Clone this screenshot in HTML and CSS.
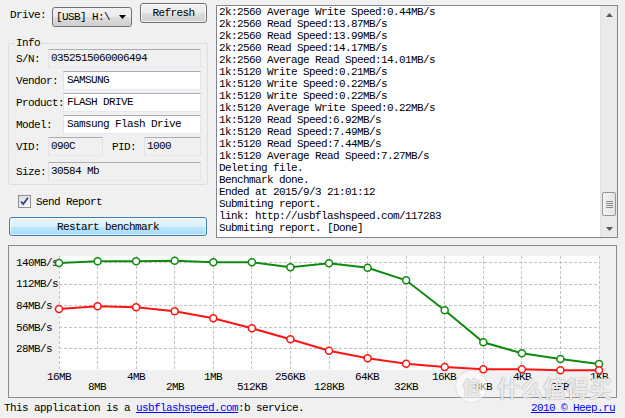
FILE: index.html
```html
<!DOCTYPE html>
<html>
<head>
<meta charset="utf-8">
<title>USB Flash Benchmark</title>
<link rel="stylesheet" href="styles.css">
</head>
<body>
<div class="app">
  <div class="top">
    <div class="left">
      <div class="drive-row">
        <span class="drive-lbl">Drive:</span>
        <div class="combo"><span class="combo-text">[USB] H:\</span><svg class="combo-arrow" width="7" height="4" viewBox="0 0 7 4"><path d="M0 0h7L3.5 4z" fill="#000"/></svg></div>
        <button class="btn refresh">Refresh</button>
      </div>
      <fieldset class="info">
        <legend>Info</legend>
        <div class="row first"><span class="lbl w-short">S/N:</span><div class="field ro grow">0352515060006494</div></div>
        <div class="row"><span class="lbl w-long">Vendor:</span><div class="field grow pad3">SAMSUNG</div></div>
        <div class="row"><span class="lbl w-long">Product:</span><div class="field grow pad3">FLASH DRIVE</div></div>
        <div class="row"><span class="lbl w-long">Model:</span><div class="field grow pad3">Samsung Flash Drive</div></div>
        <div class="row"><span class="lbl w-short">VID:</span><div class="field ro vid">090C</div><span class="lbl pid">PID:</span><div class="field ro grow">1000</div></div>
        <div class="row size"><span class="lbl w-short">Size:</span><div class="field ro grow">30584 Mb</div></div>
      </fieldset>
      <div class="check"><span class="box"><svg width="11" height="11" viewBox="0 0 11 11"><path d="M2 5.5l2.2 2.6L9 1.8" fill="none" stroke="#2b3f9c" stroke-width="1.8"/></svg></span><span>Send Report</span></div>
      <button class="btn restart">Restart benchmark</button>
    </div>
    <div class="log">
      <div class="log-text">2k:2560 Average Write Speed:0.44MB/s
2k:2560 Read Speed:13.87MB/s
2k:2560 Read Speed:13.99MB/s
2k:2560 Read Speed:14.17MB/s
2k:2560 Average Read Speed:14.01MB/s
1k:5120 Write Speed:0.21MB/s
1k:5120 Write Speed:0.22MB/s
1k:5120 Write Speed:0.22MB/s
1k:5120 Average Write Speed:0.22MB/s
1k:5120 Read Speed:6.92MB/s
1k:5120 Read Speed:7.49MB/s
1k:5120 Read Speed:7.44MB/s
1k:5120 Average Read Speed:7.27MB/s
Deleting file.
Benchmark done.
Ended at 2015/9/3 21:01:12
Submiting report.
link: http://usbflashspeed.com/117283
Submiting report. [Done]</div>
      <div class="scrollbar">
        <div class="sb-btn"><svg width="7" height="4" viewBox="0 0 7 4"><path d="M0 4h7L3.5 0z" fill="#5a5a5a"/></svg></div>
        <div class="sb-track"><div class="sb-thumb"><span></span><span></span><span></span><span></span></div></div>
        <div class="sb-btn"><svg width="7" height="4" viewBox="0 0 7 4"><path d="M0 0h7L3.5 4z" fill="#5a5a5a"/></svg></div>
      </div>
    </div>
  </div>
  <div class="chart">
    <svg width="608" height="151" viewBox="9 246 608 151">
      <rect x="59" y="256" width="540" height="114" fill="#fff"/>
      <g stroke="#c4c4c4" stroke-width="1" stroke-dasharray="3 2" fill="none">
        <path d="M59 262.5H599M59 284.5H599M59 305.5H599M59 327.5H599M59 348.5H599"/>
        <path d="M59.5 256V370M97.5 256V370M136.5 256V370M174.5 256V370M213.5 256V370M251.5 256V370M290.5 256V370M329.5 256V370M367.5 256V370M406.5 256V370M444.5 256V370M483.5 256V370M521.5 256V370M560.5 256V370M599.5 256V370"/>
      </g>
      <g class="ax">
        <text x="16" y="266">140MB/s</text>
        <text x="16" y="287">112MB/s</text>
        <text x="16" y="309">84MB/s</text>
        <text x="16" y="331">56MB/s</text>
        <text x="16" y="352">28MB/s</text>
      </g>
      <g class="ax mid">
        <text x="59" y="380">16MB</text>
        <text x="136" y="380">4MB</text>
        <text x="213" y="380">1MB</text>
        <text x="290" y="380">256KB</text>
        <text x="367" y="380">64KB</text>
        <text x="444" y="380">16KB</text>
        <text x="522" y="380">4KB</text>
        <text x="599" y="380">1KB</text>
        <text x="97" y="390">8MB</text>
        <text x="175" y="390">2MB</text>
        <text x="252" y="390">512KB</text>
        <text x="329" y="390">128KB</text>
        <text x="406" y="390">32KB</text>
        <text x="483" y="390">8KB</text>
        <text x="560" y="390">2KB</text>
      </g>
      <polyline fill="none" stroke="#0f8a0f" stroke-width="2" points="59,263 97.6,261.3 136.1,261.3 174.7,260.7 213.3,262.3 251.9,262.3 290.4,267.3 329,263.3 367.6,267.7 406.1,280.3 444.7,310.3 483.3,342.3 521.9,353.3 560.4,359 599,364"/>
      <polyline fill="none" stroke="#ff1414" stroke-width="2" points="59,309 97.6,306.3 136.1,307.3 174.7,311.3 213.3,318.3 251.9,328.3 290.4,339.3 329,350.7 367.6,358.3 406.1,363.7 444.7,367 483.3,369.3 521.9,369.3 560.4,370.3 599,370.3"/>
      <g fill="#fff" stroke="#0f8a0f" stroke-width="1.5">
        <circle cx="59" cy="263" r="3.5"/><circle cx="97.6" cy="261.3" r="3.5"/><circle cx="136.1" cy="261.3" r="3.5"/><circle cx="174.7" cy="260.7" r="3.5"/><circle cx="213.3" cy="262.3" r="3.5"/><circle cx="251.9" cy="262.3" r="3.5"/><circle cx="290.4" cy="267.3" r="3.5"/><circle cx="329" cy="263.3" r="3.5"/><circle cx="367.6" cy="267.7" r="3.5"/><circle cx="406.1" cy="280.3" r="3.5"/><circle cx="444.7" cy="310.3" r="3.5"/><circle cx="483.3" cy="342.3" r="3.5"/><circle cx="521.9" cy="353.3" r="3.5"/><circle cx="560.4" cy="359" r="3.5"/><circle cx="599" cy="364" r="3.5"/>
      </g>
      <g fill="#fff" stroke="#ff1414" stroke-width="1.5">
        <circle cx="59" cy="309" r="3.5"/><circle cx="97.6" cy="306.3" r="3.5"/><circle cx="136.1" cy="307.3" r="3.5"/><circle cx="174.7" cy="311.3" r="3.5"/><circle cx="213.3" cy="318.3" r="3.5"/><circle cx="251.9" cy="328.3" r="3.5"/><circle cx="290.4" cy="339.3" r="3.5"/><circle cx="329" cy="350.7" r="3.5"/><circle cx="367.6" cy="358.3" r="3.5"/><circle cx="406.1" cy="363.7" r="3.5"/><circle cx="444.7" cy="367" r="3.5"/><circle cx="483.3" cy="369.3" r="3.5"/><circle cx="521.9" cy="369.3" r="3.5"/><circle cx="560.4" cy="370.3" r="3.5"/><circle cx="599" cy="370.3" r="3.5"/>
      </g>
    </svg>
  </div>
  <div class="status">
    <span>This application is a <a class="link" href="#">usbflashspeed.com</a>:b service.</span>
    <a class="link" href="#">2010 © Heep.ru</a>
  </div>
  <div class="watermark"><span class="wm-logo">值</span><span class="wm-text">什么值得买</span></div>
</div>
</body>
</html>
```

FILE: styles.css
```css
* { box-sizing: border-box; }
html, body { margin: 0; padding: 0; }
body {
  width: 625px;
  height: 418px;
  overflow: hidden;
  background: #f0f0f0;
  color: #000;
  font-family: "Liberation Mono", "DejaVu Sans Mono", monospace;
  font-size: 11px;
  letter-spacing: -0.6px;
  line-height: 12px;
}
.app {
  position: relative;
  width: 625px;
  height: 418px;
  display: flex;
  flex-direction: column;
}
.top {
  display: flex;
  align-items: flex-start;
  padding: 3px 7px 0 8px;
  gap: 8px;
}
.left {
  width: 200px;
  display: flex;
  flex-direction: column;
}
.drive-row {
  display: flex;
  align-items: flex-start;
  height: 24px;
}
.drive-lbl {
  margin: 6px 0 0 2px;
}
.combo {
  margin: 4px 0 0 6px;
  width: 80px;
  height: 20px;
  border: 1px solid #707070;
  border-radius: 3px;
  background: linear-gradient(#f2f2f2 0%, #ebebeb 50%, #dddddd 51%, #cfcfcf 100%);
  display: flex;
  align-items: center;
  justify-content: space-between;
  padding: 0 5px 0 3px;
}
.btn {
  font: inherit;
  letter-spacing: inherit;
  line-height: 12px;
  color: #000;
  padding: 0;
  border: 1px solid #707070;
  border-radius: 3px;
  background: linear-gradient(#f2f2f2 0%, #ebebeb 50%, #dddddd 51%, #cfcfcf 100%);
  box-shadow: inset 0 0 0 1px rgba(255,255,255,0.7);
}
.refresh {
  margin-left: 8px;
  width: 67px;
  height: 20px;
}
.info {
  margin: 10px 0 0;
  padding: 0 6px 3px 7px;
  border: 1px solid #d5dfe5;
  border-radius: 3px;
  min-width: 0;
}
.info legend {
  padding: 0 1px;
  margin-left: -1px;
  line-height: 12px;
}
.row {
  display: flex;
  align-items: center;
  height: 19px;
  margin-top: 3px;
}
.row.first { margin-top: 0; }
.row.size { margin-top: 6px; }
.lbl { flex: none; }
.w-short { width: 32px; }
.w-long { width: 47px; }
.pid { width: 32px; margin-left: 9px; }
.field {
  height: 19px;
  border: 1px solid;
  border-color: #abadb3 #e2e3ea #e3e9ef #e2e3ea;
  background: #fff;
  padding-left: 2px;
  line-height: 17px;
  white-space: nowrap;
  overflow: hidden;
}
.field.ro { background: #f0f0f0; }
.field.pad3 { padding-left: 3px; }
.grow { flex: 1; }
.vid { width: 55px; }
.check {
  display: flex;
  align-items: center;
  height: 13px;
  margin: 10px 0 0 10px;
}
.box {
  width: 13px;
  height: 13px;
  border: 1px solid #8e8f8f;
  background: linear-gradient(135deg, #dcdcdc, #fbfbfb);
  margin-right: 5px;
  display: flex;
  align-items: center;
  justify-content: center;
}
.box svg { display: block; }
.restart {
  margin: 9px 0 0 1px;
  width: 198px;
  height: 19px;
  border-color: #3c7fb1;
  background: linear-gradient(#eaf6fd 0%, #d9f0fc 50%, #bee6fd 51%, #a7d9f5 100%);
  box-shadow: inset 0 0 0 1px rgba(255,255,255,0.6);
}
.log {
  margin-top: 2px;
  width: 402px;
  height: 233px;
  border: 1px solid #828790;
  background: #fff;
  display: flex;
}
.log-text {
  flex: 1;
  padding: 0 0 0 2px;
  white-space: pre;
  overflow: hidden;
}
.scrollbar {
  width: 17px;
  display: flex;
  flex-direction: column;
  background: #eaeaea;
  border-left: 1px solid #e3e3e3;
}
.sb-btn {
  height: 17px;
  display: flex;
  align-items: center;
  justify-content: center;
}
.sb-btn svg { display: block; }
.sb-track {
  flex: 1;
  padding-top: 169px;
}
.sb-thumb {
  margin: 0 1px;
  height: 24px;
  border: 1px solid #969696;
  border-radius: 2px;
  background: linear-gradient(90deg, #f3f3f3, #e4e4e4);
  display: flex;
  flex-direction: column;
  align-items: center;
  justify-content: center;
  gap: 1px;
}
.sb-thumb span {
  width: 7px;
  height: 1px;
  background: #8a8a8a;
}
.chart {
  margin: 7px 8px 0;
  height: 153px;
  border: 1px solid #8c8c8c;
}
.chart svg { display: block; }
.ax text {
  font-family: "Liberation Mono", "DejaVu Sans Mono", monospace;
  font-size: 11px;
  letter-spacing: -0.6px;
  fill: #000;
}
.ax.mid text { text-anchor: middle; }
.status {
  flex: 1;
  display: flex;
  align-items: center;
  justify-content: space-between;
  padding: 0 10px 0 4px;
}
.link {
  color: #0000ff;
  text-decoration: underline;
}
.watermark {
  position: absolute;
  left: 456px;
  top: 371px;
  display: flex;
  align-items: center;
  gap: 10px;
  color: rgba(255,255,255,0.85);
  font-family: "Noto Sans CJK SC", sans-serif;
  font-weight: 700;
  letter-spacing: 0;
  text-shadow: 0 0 1px rgba(0,0,0,0.35), 0 0 1px rgba(0,0,0,0.2);
  pointer-events: none;
}
.wm-logo {
  width: 31px;
  height: 31px;
  border-radius: 50%;
  background: rgba(255,255,255,0.55);
  box-shadow: 0 0 1px rgba(0,0,0,0.3);
  font-size: 18px;
  line-height: 31px;
  text-align: center;
}
.wm-text {
  font-size: 23px;
  line-height: 30px;
}
```
